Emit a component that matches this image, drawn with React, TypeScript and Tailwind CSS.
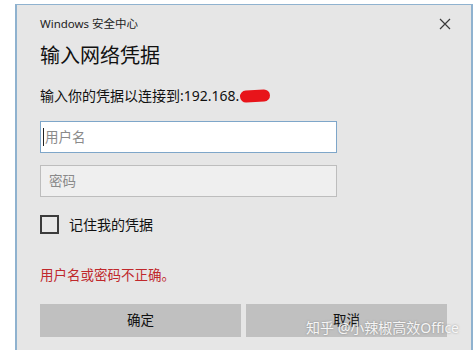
const FONT = "font-['Noto_Sans','Noto_Sans_CJK_SC',sans-serif]";

function CloseIcon() {
  return (
    <svg width="12" height="12" viewBox="0 0 12 12" className="text-[#3a3a3a]">
      <path d="M1 1 L11 11 M11 1 L1 11" stroke="currentColor" strokeWidth="1.2" fill="none" />
    </svg>
  );
}

export default function App() {
  return (
    <div className={`relative flex h-[350px] w-[474px] overflow-hidden bg-white pl-[15px] pt-[4px] pr-[2px] ${FONT}`}>
      <div className="flex flex-1 flex-col border-l-2 border-r-2 border-t border-[#8fb2cf] bg-[#e6e6e6] pl-[23px] pr-[20px]">
        <div className="flex h-[36px] items-center justify-between pt-[2px]">
          <span className="text-[11.5px] text-[#222]">Windows 安全中心</span>
          <CloseIcon />
        </div>

        <h1 className="text-[20px] leading-[29px] text-[#111]">输入网络凭据</h1>

        <div className="mt-[16px] flex items-center text-[14px] leading-[20px] text-[#111]">
          <span>输入你的凭据以连接到:192.168.</span>
          <span className="ml-[1px] h-[12px] w-[30px] -rotate-3 rounded-full bg-[#e8141a]" />
        </div>

        <div className="mt-[15px] flex h-[32px] w-[297px] items-center border border-[#7ea6c9] bg-white pl-[2px]">
          <span className="h-[18px] w-px bg-[#222]" />
          <span className="ml-[1px] text-[13.5px] text-[#8a8a8a]">用户名</span>
        </div>

        <div className="mt-[12px] flex h-[32px] w-[297px] items-center border border-[#bdbdbd] bg-[#efefef] pl-[8px]">
          <span className="text-[13.5px] text-[#8a8a8a]">密码</span>
        </div>

        <label className="mt-[17px] flex items-center gap-[10px]">
          <span className="h-[19px] w-[19px] border-2 border-[#3c3c3c] bg-[#e9e9e9]" />
          <span className="text-[14px] text-[#111]">记住我的凭据</span>
        </label>

        <p className="mt-[30px] text-[13.5px] leading-[20px] text-[#c0282c]">用户名或密码不正确。</p>

        <div className="mt-[19px] flex gap-[5px] pr-[4px]">
          <button className="flex h-[33px] w-[201px] items-center justify-center bg-[#c0c0c0] text-[13.5px] text-[#111]">确定</button>
          <button className="flex h-[33px] w-[201px] items-center justify-center bg-[#c0c0c0] text-[13.5px] text-[#111]">取消</button>
        </div>
      </div>

      <div className="absolute left-[306px] top-[318px] whitespace-nowrap text-[14px] leading-[20px] text-white/90 [text-shadow:0_0_2px_rgba(90,90,90,0.6)]">
        知乎 @小辣椒高效Office
      </div>
    </div>
  );
}
